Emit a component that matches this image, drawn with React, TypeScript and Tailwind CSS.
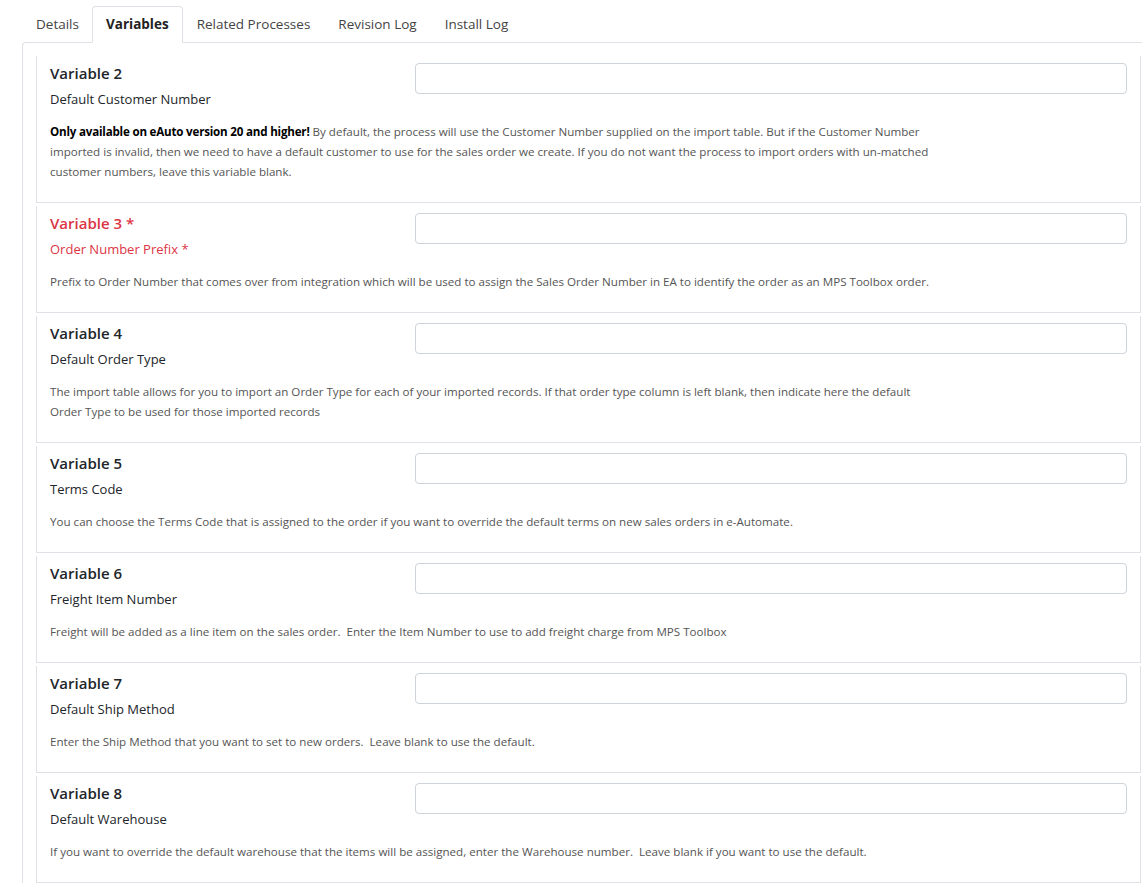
const items: { n: string; label: string; req?: boolean; text: React.ReactNode }[] = [
  { n: "2", label: "Default Customer Number", text: (<><b className="text-black font-bold tracking-[-0.2px]">Only available on eAuto version 20 and higher!</b> By default, the process will use the Customer Number supplied on the import table. But if the Customer Number imported is invalid, then we need to have a default customer to use for the sales order we create. If you do not want the process to import orders with un-matched customer numbers, leave this variable blank.</>) },
  { n: "3", label: "Order Number Prefix", req: true, text: "Prefix to Order Number that comes over from integration which will be used to assign the Sales Order Number in EA to identify the order as an MPS Toolbox order." },
  { n: "4", label: "Default Order Type", text: "The import table allows for you to import an Order Type for each of your imported records. If that order type column is left blank, then indicate here the default Order Type to be used for those imported records" },
  { n: "5", label: "Terms Code", text: "You can choose the Terms Code that is assigned to the order if you want to override the default terms on new sales orders in e-Automate." },
  { n: "6", label: "Freight Item Number", text: "Freight will be added as a line item on the sales order.\u00a0 Enter the Item Number to use to add freight charge from MPS Toolbox" },
  { n: "7", label: "Default Ship Method", text: "Enter the Ship Method that you want to set to new orders.\u00a0 Leave blank to use the default." },
  { n: "8", label: "Default Warehouse", text: "If you want to override the default warehouse that the items will be assigned, enter the Warehouse number.\u00a0 Leave blank if you want to use the default." },
];

export default function App() {
  return (
    <div className="w-[1142px] h-[894px] overflow-hidden bg-white text-[#212529]" style={{ fontFamily: '"Open Sans", "Noto Sans", sans-serif' }}>
      <div className="pl-[22px] pt-[6px]">
        <div className="flex text-[13.5px] text-[#444] pl-[1px]">
          <div className="px-[13px] h-[36px] flex items-center">Details</div>
          <div className="px-[13px] h-[37px] flex items-center font-bold text-[#222] border border-[#dee2e6] border-b-white rounded-t-[4px] bg-white -mb-[1px] relative">Variables</div>
          <div className="px-[14px] h-[36px] flex items-center">Related Processes</div>
          <div className="px-[14px] h-[36px] flex items-center">Revision Log</div>
          <div className="px-[14px] h-[36px] flex items-center">Install Log</div>
        </div>
        <div className="border-l border-t border-[#dee2e6] rounded-tl-[4px] pl-[13px] pt-[13px]">
          {items.map((it) => {
            const red = it.req ? "text-[#dc3545]" : "";
            return (
              <div key={it.n} className="border border-t-0 border-[#dee2e6] mr-[1px] mb-[3px] pl-[13px] pr-[13px] pt-[5px] pb-[20px]">
                <div className="flex">
                  <div className="w-[365px] shrink-0">
                    <div className={`text-[15px] leading-[24px] font-semibold ${red}`}>Variable {it.n}{it.req ? " *" : ""}</div>
                    <div className={`text-[13px] leading-[28px] ${red}`}>{it.label}{it.req ? " *" : ""}</div>
                  </div>
                  <div className="flex-1 pt-[2px]">
                    <div className="h-[31px] border border-[#ced4da] rounded-[4px] bg-white" />
                  </div>
                </div>
                <div className="mt-[9px] max-w-[890px] text-[11.6px] leading-[20px] text-[#555]">{it.text}</div>
              </div>
            );
          })}
        </div>
      </div>
    </div>
  );
}
